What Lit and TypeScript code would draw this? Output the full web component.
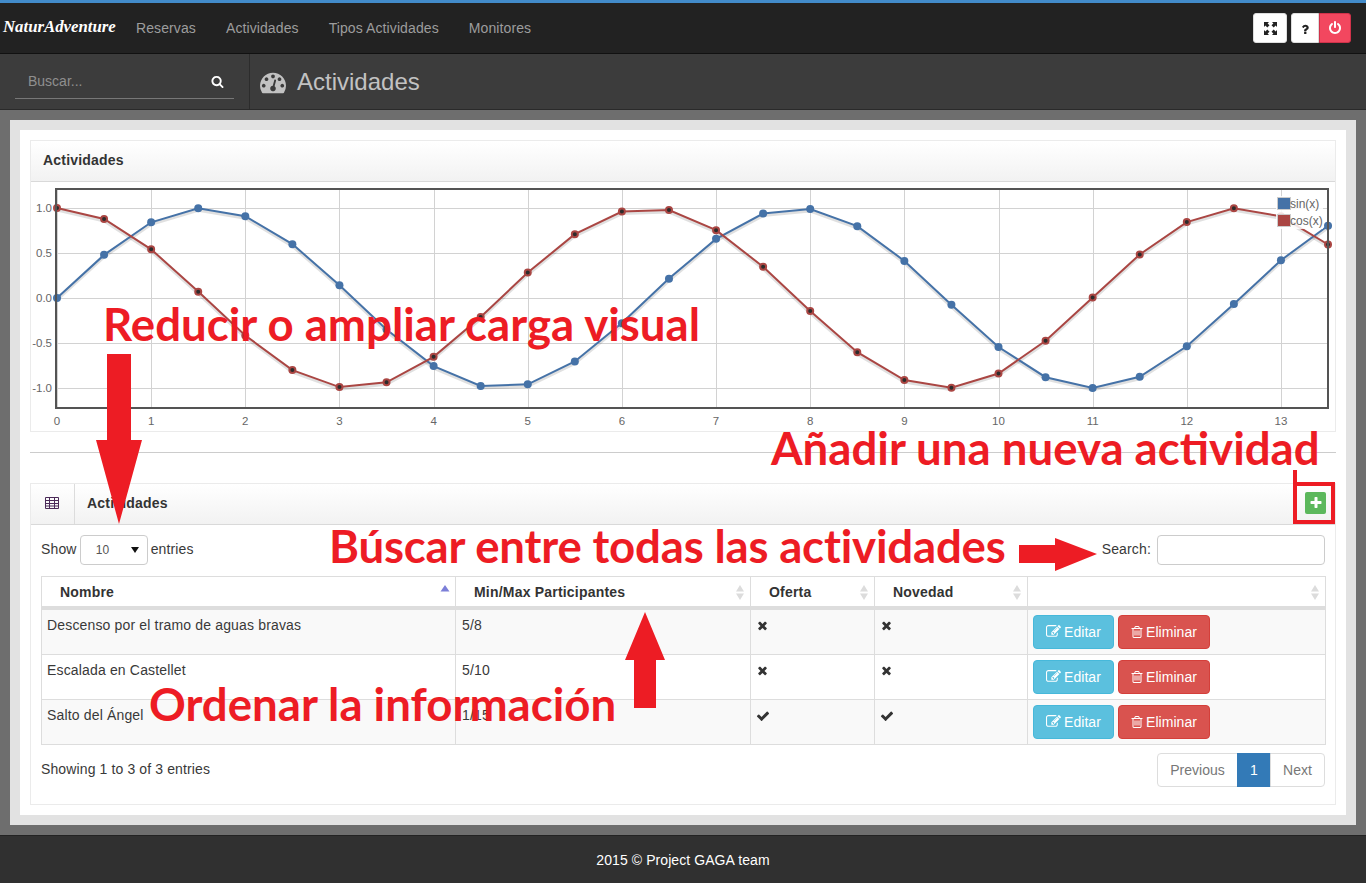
import { LitElement, css, html, svg } from 'lit';
import { customElement } from 'lit/decorators.js';

const ICONS: Record<string, string> = {
  search: 'M1216 832q0-185-131.5-316.5t-316.5-131.5-316.5 131.5-131.5 316.5 131.5 316.5 316.5 131.5 316.5-131.5 131.5-316.5zm512 832q0 52-38 90t-90 38q-54 0-90-38l-343-342q-179 124-399 124-143 0-273.5-55.5t-225-150-150-225-55.5-273.5 55.5-273.5 150-225 225-150 273.5-55.5 273.5 55.5 225 150 150 225 55.5 273.5q0 220-124 399l343 343q37 37 37 90z',
  check: 'M1671 566q0 40-28 68l-724 724-136 136q-28 28-68 28t-68-28l-136-136-362-362q-28-28-28-68t28-68l136-136q28-28 68-28t68 28l294 295 656-657q28-28 68-28t68 28l136 136q28 28 28 68z',
  times: 'M1490 1322q0 40-28 68l-136 136q-28 28-68 28t-68-28l-294-294-294 294q-28 28-68 28t-68-28l-136-136q-28-28-28-68t28-68l294-294-294-294q-28-28-28-68t28-68l136-136q28-28 68-28t68 28l294 294 294-294q28-28 68-28t68 28l136 136q28 28 28 68t-28 68l-294 294 294 294q28 28 28 68z',
  plus: 'M1600 736v192q0 40-28 68t-68 28h-416v416q0 40-28 68t-68 28h-192q-40 0-68-28t-28-68v-416h-416q-40 0-68-28t-28-68v-192q0-40 28-68t68-28h416v-416q0-40 28-68t68-28h192q40 0 68 28t28 68v416h416q40 0 68 28t28 68z',
  power: 'M1664 896q0 156-61 298t-164 245-245 164-298 61-298-61-245-164-164-245-61-298q0-182 80.5-343t226.5-270q43-32 95.5-25t83.5 50q32 42 24.5 94.5t-49.5 84.5q-98 74-151.5 181t-53.5 228q0 104 40.5 198.5t109.5 163.5 163.5 109.5 198.5 40.5 198.5-40.5 163.5-109.5 109.5-163.5 40.5-198.5q0-121-53.5-228t-151.5-181q-42-32-49.5-84.5t24.5-94.5q31-43 84-50t95 25q146 109 226.5 270t80.5 343zm-640-768v640q0 52-38 90t-90 38-90-38-38-90v-640q0-52 38-90t90-38 90 38 38 90z',
  trash: 'M704 736v576q0 14-9 23t-23 9h-64q-14 0-23-9t-9-23v-576q0-14 9-23t23-9h64q14 0 23 9t9 23zm256 0v576q0 14-9 23t-23 9h-64q-14 0-23-9t-9-23v-576q0-14 9-23t23-9h64q14 0 23 9t9 23zm256 0v576q0 14-9 23t-23 9h-64q-14 0-23-9t-9-23v-576q0-14 9-23t23-9h64q14 0 23 9t9 23zm128 724v-948h-896v948q0 22 7 40.5t14.5 27 10.5 8.5h832q3 0 10.5-8.5t14.5-27 7-40.5zm-672-1076h448l-48-117q-7-9-17-11h-317q-10 2-17 11zm928 32v64q0 14-9 23t-23 9h-96v948q0 83-47 143.5t-113 60.5h-832q-66 0-113-58.5t-47-141.5v-952h-96q-14 0-23-9t-9-23v-64q0-14 9-23t23-9h309l70-167q15-37 54-63t79-26h320q40 0 79 26t54 63l70 167h309q14 0 23 9t9 23z',
  edit: 'M888 1184l116-116-152-152-116 116v56h96v96h56zm440-720q-16-16-33 1l-350 350q-17 17-1 33t33-1l350-350q17-17 1-33zm80 594v190q0 119-84.5 203.5t-203.5 84.5h-832q-119 0-203.5-84.5t-84.5-203.5v-832q0-119 84.5-203.5t203.5-84.5h832q63 0 117 25 15 7 18 23 3 17-9 29l-49 49q-14 14-32 8-23-6-45-6h-832q-66 0-113 47t-47 113v832q0 66 47 113t113 47h832q66 0 113-47t47-113v-126q0-13 9-22l64-64q15-15 35-7t20 29zm-96-738l288 288-672 672h-288v-288zm444 132l-92 92-288-288 92-92q28-28 68-28t68 28l152 152q28 28 28 68t-28 68z',
  gauge: 'M384 1152q0-53-37.5-90.5t-90.5-37.5-90.5 37.5-37.5 90.5 37.5 90.5 90.5 37.5 90.5-37.5 37.5-90.5zm192-448q0-53-37.5-90.5t-90.5-37.5-90.5 37.5-37.5 90.5 37.5 90.5 90.5 37.5 90.5-37.5 37.5-90.5zm428 481l101-382q6-26-7.5-48.5t-38.5-29.5-48 6.5-30 39.5l-101 382q-60 5-107 43.5t-63 98.5q-20 77 20 146t117 89 146-20 89-117q16-60-6-117t-72-91zm660-33q0-53-37.5-90.5t-90.5-37.5-90.5 37.5-37.5 90.5 37.5 90.5 90.5 37.5 90.5-37.5 37.5-90.5zm-640-640q0-53-37.5-90.5t-90.5-37.5-90.5 37.5-37.5 90.5 37.5 90.5 90.5 37.5 90.5-37.5 37.5-90.5zm448 192q0-53-37.5-90.5t-90.5-37.5-90.5 37.5-37.5 90.5 37.5 90.5 90.5 37.5 90.5-37.5 37.5-90.5zm320 448q0 261-141 483-19 29-54 29h-1402q-35 0-54-29-141-221-141-483 0-182 71-348t191-286 286-191 348-71 348 71 286 191 191 286 71 348z',
  help: 'M1024 1376v240q0 16-12 28t-28 12h-240q-16 0-28-12t-12-28v-240q0-16 12-28t28-12h240q16 0 28 12t12 28zm316-600q0 54-15.5 101t-35 76.5-55 59.5-57.5 43.5-61 35.5q-41 23-68.5 65t-27.5 67q0 17-12 32.5t-28 15.5h-240q-15 0-25.5-18.5t-10.5-37.5v-45q0-83 65-156.5t143-108.5q59-27 84-56t25-76q0-42-46.5-74t-107.5-32q-65 0-108 29-35 25-107 115-13 16-31 16-12 0-25-8l-164-125q-13-10-15.5-25t5.5-28q160-266 464-266 80 0 161 31t146 83 106 127.5 41 158.5z',
};

const icon = (name: string, size: number) => html`<svg class="ico" width=${size} height=${size} viewBox="0 0 1792 1792" fill="currentColor"><path d=${ICONS[name]}></path></svg>`;

const ROWS = [
  { name: 'Descenso por el tramo de aguas bravas', range: '5/8', offer: false, fresh: false },
  { name: 'Escalada en Castellet', range: '5/10', offer: false, fresh: false },
  { name: 'Salto del Ángel', range: '1/15', offer: true, fresh: true },
];

const px = (v: number) => 57 + v * 94.15;
const py = (v: number) => 298 - v * 90;
const crisp = (v: number) => Math.round(v) + 0.5;

@customElement('app-root')
export class AppRoot extends LitElement {
  static styles = css`
    :host {
      display: block;
      position: relative;
      height: 883px;
      overflow: hidden;
      font-family: "Liberation Sans", Arial, sans-serif;
      font-size: 14px;
      color: #393939;
    }
    * { box-sizing: border-box; }
    .ico { display: block; flex: none; }
    .page { display: flex; flex-direction: column; height: 883px; background: #6e6e6e; }

    .nav {
      height: 54px;
      border-top: 3px solid #428bca;
      border-bottom: 1px solid #111;
      background: #222;
      display: flex;
      align-items: center;
      padding: 0 15px 0 3px;
    }
    .brand {
      font: italic bold 16.8px "Liberation Serif", serif;
      color: #fff;
      width: 133px;
      margin-top: -3px;
    }
    .nav-links { display: flex; gap: 30px; font-size: 14px; letter-spacing: .1px; color: #9d9d9d; flex: 1; }
    .tools { display: flex; gap: 4px; }
    .tool {
      height: 30px;
      background: #fff;
      border: 1px solid #ddd;
      border-radius: 3px;
      display: flex;
      align-items: center;
      justify-content: center;
      color: #222;
    }
    .tool.full { width: 34px; }
    .tool.help { width: 28px; border-radius: 3px 0 0 3px; }
    .tool.power { width: 32px; margin-left: -4px; background: #f2475f; border-color: #d0324a; color: #fff; border-radius: 0 3px 3px 0; }

    .sub {
      height: 56px;
      background: #3c3c3c;
      border-bottom: 1px solid #2a2a2a;
      display: flex;
    }
    .search-side { width: 250px; border-right: 1px solid #2c2c2c; padding: 10px 15px 0; }
    .search-box {
      width: 219px;
      height: 35px;
      border-bottom: 1px solid #777;
      display: flex;
      align-items: center;
      justify-content: space-between;
      padding: 0 10px 0 13px;
      color: #fff;
    }
    .search-box input {
      background: none;
      border: 0;
      outline: 0;
      padding: 0;
      width: 150px;
      font: 14px "Liberation Sans", Arial, sans-serif;
    }
    .search-box input::placeholder { color: #8f8f8f; opacity: 1; }
    .page-title { display: flex; align-items: center; padding-left: 10px; gap: 11px; color: #c2c2c2; font-size: 24px; }

    .main { flex: 1; padding: 10px; }
    .frame { height: 705px; border: 10px solid #e2e2e2; background: #fff; padding: 10px; }
    .widget { border: 1px solid #ebebeb; }
    .head {
      height: 41px;
      display: flex;
      align-items: center;
      border-bottom: 1px solid #d9d9d9;
      background: linear-gradient(#fff, #f2f2f2);
      font-size: 14px;
      font-weight: bold;
      color: #333;
      letter-spacing: .2px;
      padding-bottom: 3px;
    }
    .head .title { padding-left: 12px; flex: 1; }
    .head .cell {
      width: 44px;
      height: 40px;
      margin-bottom: -3px;
      padding: 0 2px 3px 0;
      border-right: 1px solid #dcdcdc;
      display: flex;
      align-items: center;
      justify-content: center;
      color: #4b2a58;
    }
    .chart { display: block; width: 1304px; height: 249px; }
    .chart text { font: 11.5px "Liberation Sans", Arial, sans-serif; fill: #666; }
    .chart text.leg { font-size: 12px; fill: #666; }
    .rule { height: 1px; background: #ccc; margin: 20px 0 30px; }

    .add {
      width: 21px;
      height: 22px;
      margin-right: 9px;
      border-radius: 2px;
      background: #5cb85c;
      color: #fff;
      display: flex;
      align-items: center;
      justify-content: center;
    }
    .list { padding: 10px 10px 17px; height: 279px; }
    .controls { display: flex; justify-content: space-between; align-items: center; height: 30px; margin-bottom: 11px; font-size: 14px; letter-spacing: .15px; }
    .controls label { display: flex; align-items: center; gap: 3px; }
    .controls label.find { gap: 6px; }
    .controls .lbl { margin-top: -2px; }
    .select {
      position: relative;
      width: 68px;
      height: 30px;
      border: 1px solid #ccc;
      border-radius: 4px;
      padding-left: 15px;
      display: flex;
      align-items: center;
      font-size: 12px;
      color: #555;
      background: #fff;
    }
    .select::after {
      content: "";
      position: absolute;
      right: 8px;
      top: 11px;
      border: 4px solid transparent;
      border-top: 6px solid #111;
      border-bottom: 0;
    }
    .controls input { width: 168px; height: 30px; border: 1px solid #ccc; border-radius: 4px; background: #fff; }

    table { width: 1284px; border-collapse: collapse; table-layout: fixed; }
    th, td { border: 1px solid #ddd; text-align: left; vertical-align: top; font-size: 14px; }
    th {
      height: 31px;
      position: relative;
      padding: 7px 18px 0;
      border-bottom: 4px solid #ddd;
      font-weight: bold;
      color: #333;
      letter-spacing: .2px;
    }
    td { height: 45px; line-height: 18px; padding: 6px 5px 0; letter-spacing: .16px; }
    td.range { padding-left: 6px; }
    tbody tr:nth-child(odd) td { background: #f9f9f9; }
    td.mark { padding: 9px 5px 0; color: #333; }
    td.actions { padding: 5px; }
    .sort { position: absolute; right: 5px; top: 8px; display: block; }
    .btns { display: flex; gap: 4px; }
    .btn {
      height: 34px;
      border-radius: 4px;
      display: flex;
      align-items: center;
      gap: 3px;
      color: #fff;
      font-size: 14px;
      letter-spacing: .05px;
      padding: 0 11px 0 12px;
      border: 1px solid;
    }
    .btn.edit { width: 81px; background: #5bc0de; border-color: #46b8da; }
    .btn.del { width: 92px; background: #d9534f; border-color: #d43f3a; gap: 2px; padding-left: 11px; }

    .foot-row { display: flex; justify-content: space-between; margin-top: 8px; font-size: 14px; letter-spacing: .12px; }
    .info { padding-top: 8px; }
    .pager { display: flex; height: 34px; color: #777; letter-spacing: 0; }
    .pager span { border: 1px solid #ddd; display: flex; align-items: center; justify-content: center; background: #fff; margin-left: -1px; }
    .pager .prev { width: 81px; border-radius: 4px 0 0 4px; }
    .pager .cur { width: 34px; background: #337ab7; border-color: #337ab7; color: #fff; }
    .pager .next { width: 55px; border-radius: 0 4px 4px 0; }

    .footer {
      height: 48px;
      background: #303030;
      border-top: 1px solid #222;
      color: #fff;
      font-size: 14px;
      letter-spacing: .08px;
      display: flex;
      align-items: center;
      justify-content: center;
    }

    .note {
      position: absolute;
      white-space: nowrap;
      font: bold 45.6px Lato, "Open Sans", sans-serif;
      line-height: 48px;
      color: #ed1c24;
    }
    .note.a { left: 103px; top: 300px; }
    .note.b { left: 771px; top: 424px; }
    .note.c { left: 329px; top: 522px; letter-spacing: -.2px; }
    .note.d { left: 149px; top: 680px; }
    .marks { position: absolute; left: 0; top: 0; pointer-events: none; }
  `;

  private renderChart() {
    const vals = Array.from({ length: 28 }, (_, i) => i * 0.5);
    const line = (f: (v: number) => number) => vals.map(v => `${px(v).toFixed(1)},${py(f(v)).toFixed(1)}`).join(' ');
    const xTicks = Array.from({ length: 14 }, (_, i) => i);
    const yTicks = [1, 0.5, 0, -0.5, -1];
    return html`<svg class="chart" viewBox="31 182 1304 249">
      ${yTicks.map(v => svg`<line x1="56" x2="1328" y1=${crisp(py(v))} y2=${crisp(py(v))} stroke="#d2d2d2"></line>
        <text x="52" y=${py(v) + 4} text-anchor="end">${v.toFixed(1)}</text>`)}
      ${xTicks.map(v => svg`<line x1=${crisp(px(v))} x2=${crisp(px(v))} y1="189" y2="408" stroke="#d2d2d2"></line>
        <text x=${px(v)} y="425" text-anchor="middle">${v}</text>`)}
      <polyline points=${line(Math.sin)} transform="translate(0 2)" fill="none" stroke="#000" stroke-opacity=".12" stroke-width="3"></polyline>
      <polyline points=${line(Math.cos)} transform="translate(0 2)" fill="none" stroke="#000" stroke-opacity=".12" stroke-width="3"></polyline>
      <polyline points=${line(Math.sin)} fill="none" stroke="#4572a7" stroke-width="2"></polyline>
      <polyline points=${line(Math.cos)} fill="none" stroke="#aa4643" stroke-width="2"></polyline>
      ${vals.map(v => svg`<circle cx=${px(v)} cy=${py(Math.sin(v))} r="4" fill="#4572a7"></circle>`)}
      ${vals.map(v => svg`<circle cx=${px(v)} cy=${py(Math.cos(v))} r="3" fill="#2c2c2c" stroke="#aa4643" stroke-width="2"></circle>`)}
      <rect x="56" y="189" width="1272" height="219" fill="none" stroke="#545454" stroke-width="2"></rect>
      <rect x="1276" y="196" width="47" height="33" fill="#fff" fill-opacity=".85"></rect>
      <rect x="1277.5" y="197.5" width="13" height="12" fill="#4572a7" stroke="#ccc"></rect>
      <rect x="1277.5" y="214.5" width="13" height="12" fill="#aa4643" stroke="#ccc"></rect>
      <text class="leg" x="1290" y="208">sin(x)</text>
      <text class="leg" x="1290" y="225">cos(x)</text>
    </svg>`;
  }

  private sortIcon(active = false) {
    if (active) {
      return html`<svg class="sort" width="10" height="16" viewBox="0 0 10 16"><path d="M5 0l4.500 6.500H.500z" fill="#7c7fd8"></path></svg>`;
    }
    return html`<svg class="sort" width="10" height="16" viewBox="0 0 10 16"><path d="M5 0l4 6.500H1zM5 15l4-6.500H1z" fill="#dcdcdc"></path></svg>`;
  }

  private mark(on: boolean) {
    return on ? icon('check', 14) : icon('times', 13);
  }

  render() {
    return html`
      <div class="page">
        <header class="nav">
          <div class="brand">NaturAdventure</div>
          <nav class="nav-links">
            <span>Reservas</span><span>Actividades</span><span>Tipos Actividades</span><span>Monitores</span>
          </nav>
          <div class="tools">
            <div class="tool full">
              <svg width="13" height="13" viewBox="0 0 13 13" fill="#222"><path d="M0 0h5L3.600 1.400 5.500 3.300 3.300 5.500 1.400 3.600 0 5zM13 0v5L11.600 3.600 9.700 5.500 7.500 3.300 9.400 1.400 8 0zM0 13V8l1.400 1.400 1.900-1.900 2.200 2.200-1.900 1.900L5 13zM13 13H8l1.400-1.400-1.900-1.900 2.200-2.200 1.900 1.900L13 8z"></path></svg>
            </div>
            <div class="tool help">${icon('help', 13)}</div>
            <div class="tool power">${icon('power', 14)}</div>
          </div>
        </header>
        <div class="sub">
          <div class="search-side">
            <div class="search-box">
              <input placeholder="Buscar..." />
              ${icon('search', 13)}
            </div>
          </div>
          <div class="page-title">${icon('gauge', 26)}<span>Actividades</span></div>
        </div>
        <main class="main">
          <div class="frame">
            <section class="widget">
              <div class="head"><span class="title">Actividades</span></div>
              ${this.renderChart()}
            </section>
            <div class="rule"></div>
            <section class="widget">
              <div class="head">
                <span class="cell">
                  <svg width="14" height="12" viewBox="0 0 14 12" fill="none" stroke="currentColor"><path d="M.5.500h13v11H.5zM.5 3.500h13M.5 6.500h13M.5 9h13M4.500 .500v11M9.500 .500v11"></path></svg>
                </span>
                <span class="title">Actividades</span>
                <span class="add">${icon('plus', 14)}</span>
              </div>
              <div class="list">
                <div class="controls">
                  <label><span class="lbl">Show</span> <span class="select">10</span> <span class="lbl">entries</span></label>
                  <label class="find"><span class="lbl">Search:</span> <input /></label>
                </div>
                <table>
                  <colgroup>
                    <col style="width:414px" /><col style="width:295px" /><col style="width:124px" /><col style="width:153px" /><col style="width:298px" />
                  </colgroup>
                  <thead>
                    <tr>
                      <th>Nombre${this.sortIcon(true)}</th>
                      <th>Min/Max Participantes${this.sortIcon()}</th>
                      <th>Oferta${this.sortIcon()}</th>
                      <th>Novedad${this.sortIcon()}</th>
                      <th>${this.sortIcon()}</th>
                    </tr>
                  </thead>
                  <tbody>
                    ${ROWS.map(r => html`<tr>
                      <td>${r.name}</td>
                      <td class="range">${r.range}</td>
                      <td class="mark">${this.mark(r.offer)}</td>
                      <td class="mark">${this.mark(r.fresh)}</td>
                      <td class="actions">
                        <div class="btns">
                          <span class="btn edit">${icon('edit', 15)}Editar</span>
                          <span class="btn del">${icon('trash', 14)}Eliminar</span>
                        </div>
                      </td>
                    </tr>`)}
                  </tbody>
                </table>
                <div class="foot-row">
                  <span class="info">Showing 1 to 3 of 3 entries</span>
                  <div class="pager">
                    <span class="prev">Previous</span><span class="cur">1</span><span class="next">Next</span>
                  </div>
                </div>
              </div>
            </section>
          </div>
        </main>
        <footer class="footer">2015 © Project GAGA team</footer>
      </div>

      <div class="note a">Reducir o ampliar carga visual</div>
      <div class="note b">Añadir una nueva actividad</div>
      <div class="note c">Búscar entre todas las actividades</div>
      <div class="note d">Ordenar la información</div>
      <svg class="marks" width="1366" height="883" fill="#ed1c24">
        <path d="M107 354h24v86h11l-23 84-23-84h11z"></path>
        <path d="M634 708v-48h-9l20-48 20 48h-9v48z"></path>
        <path d="M1019 545h36v-7l42 16-42 17v-8h-36z"></path>
        <path fill-rule="evenodd" d="M1293 470h4v12h38v42h-42zM1297 486v34h34v-34z"></path>
      </svg>
    `;
  }
}
